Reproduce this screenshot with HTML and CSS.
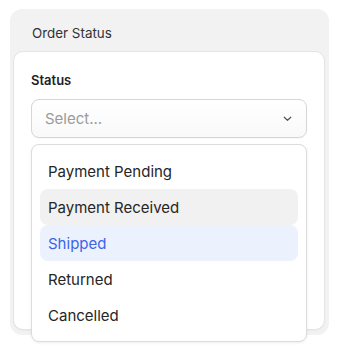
FILE: index.html
```html
<!DOCTYPE html>
<html>
<head>
<meta charset="utf-8">
<link rel="stylesheet" href="styles.css">
</head>
<body>
<div class="panel">
  <div class="panel-title">Order Status</div>
  <div class="card">
    <div class="label">Status</div>
    <div class="field">
      <div class="select">
        <span class="placeholder">Select...</span>
        <svg class="chevron" width="9" height="6" viewBox="0 0 9 6"><path d="M1.2 1.2 L4.5 4.3 L7.8 1.2" fill="none" stroke="#555" stroke-width="1.2" stroke-linecap="round" stroke-linejoin="round"/></svg>
      </div>
      <ul class="menu">
        <li class="item">Payment Pending</li>
        <li class="item hover">Payment Received</li>
        <li class="item selected">Shipped</li>
        <li class="item">Returned</li>
        <li class="item">Cancelled</li>
      </ul>
    </div>
  </div>
</div>
</body>
</html>
```
FILE: styles.css
```css
* { box-sizing: border-box; }
html, body { margin: 0; background: #fff; }
body {
  min-height: 356px;
  padding: 9px 11px 15px 10px;
  font-family: Inter, "Noto Sans", sans-serif;
  color: #222;
}
.panel {
  width: 319px;
  background: #f2f2f2;
  border-radius: 12px;
  padding: 0 4px 5px 3px;
}
.panel-title {
  font-size: 13.4px;
  line-height: 16px;
  color: #333;
  padding: 16px 0 10px 19px;
}
.card {
  height: 279px;
  background: #fff;
  border: 1px solid #e4e4e4;
  border-radius: 10px;
  padding: 19px 17px 0 17px;
  box-shadow: 0 1px 2px rgba(0,0,0,0.04);
}
.label {
  font-size: 13px;
  font-weight: 600;
  line-height: 18px;
  color: #1f1f1f;
  margin-bottom: 10px;
}
.field { position: relative; }
.select {
  height: 39px;
  border: 1px solid #d6d6d6;
  border-radius: 8px;
  background: linear-gradient(#fff, #f9f9f9);
  box-shadow: 0 1px 1px rgba(0,0,0,0.03);
  display: flex;
  align-items: center;
  justify-content: space-between;
  padding: 0 14px 0 13px;
}
.placeholder {
  font-size: 15px;
  color: #9b9b9b;
}
.chevron { display: block; margin-top: 1px; }
.menu {
  position: absolute;
  top: calc(100% + 6px);
  left: 0;
  right: 0;
  margin: 0;
  padding: 8px;
  list-style: none;
  background: #fff;
  border: 1px solid #dcdcdc;
  border-radius: 8px;
  box-shadow: 0 1px 3px rgba(0,0,0,0.07);
}
.item {
  height: 36px;
  display: flex;
  align-items: center;
  padding: 0 8px;
  font-size: 15px;
  color: #262626;
  border-radius: 8px;
}
.item.hover { background: #f1f1f1; }
.item.selected { background: #ebf2fd; color: #4063e8; }
```
